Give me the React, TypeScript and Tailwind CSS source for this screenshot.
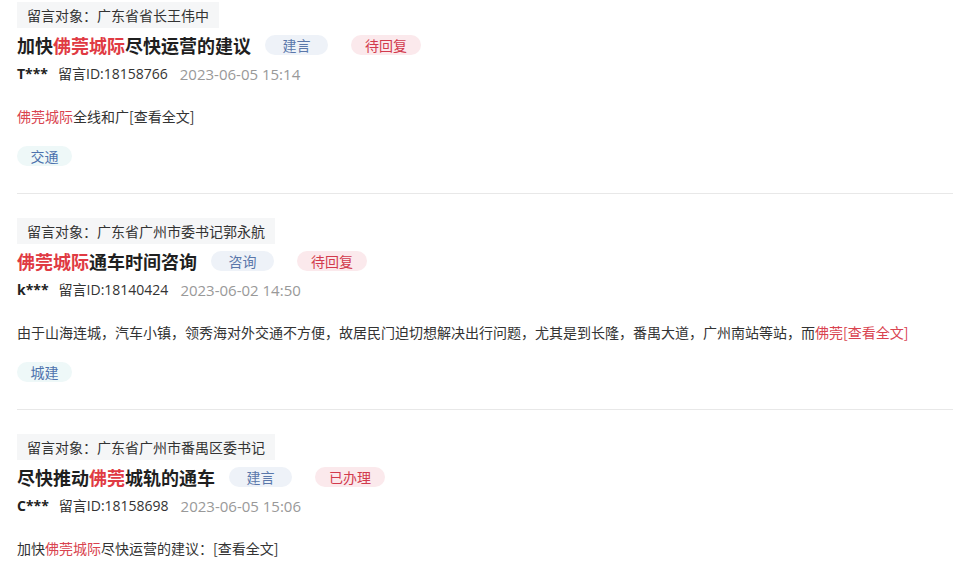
import React from 'react';

type Part = { text: string; hot?: boolean };

interface Message {
  target: string;
  title: Part[];
  kind: string;
  status: string;
  user: string;
  id: string;
  time: string;
  body: Part[];
  tag: string;
}

const messages: Message[] = [
  {
    target: '留言对象：广东省省长王伟中',
    title: [{ text: '加快' }, { text: '佛莞城际', hot: true }, { text: '尽快运营的建议' }],
    kind: '建言',
    status: '待回复',
    user: 'T***',
    id: '18158766',
    time: '2023-06-05 15:14',
    body: [{ text: '佛莞城际', hot: true }, { text: '全线和广[查看全文]' }],
    tag: '交通',
  },
  {
    target: '留言对象：广东省广州市委书记郭永航',
    title: [{ text: '佛莞城际', hot: true }, { text: '通车时间咨询' }],
    kind: '咨询',
    status: '待回复',
    user: 'k***',
    id: '18140424',
    time: '2023-06-02 14:50',
    body: [
      {
        text: '由于山海连城，汽车小镇，领秀海对外交通不方便，故居民门迫切想解决出行问题，尤其是到长隆，番禺大道，广州南站等站，而',
      },
      { text: '佛莞[查看全文]', hot: true },
    ],
    tag: '城建',
  },
  {
    target: '留言对象：广东省广州市番禺区委书记',
    title: [{ text: '尽快推动' }, { text: '佛莞', hot: true }, { text: '城轨的通车' }],
    kind: '建言',
    status: '已办理',
    user: 'C***',
    id: '18158698',
    time: '2023-06-05 15:06',
    body: [{ text: '加快' }, { text: '佛莞城际', hot: true }, { text: '尽快运营的建议：[查看全文]' }],
    tag: '',
  },
];

const MessageItem = ({ msg, first }: { msg: Message; first: boolean }) => (
  <div className={`border-b border-[#e8e8e8] pb-[27px] ${first ? 'pt-[2px]' : 'pt-[24px]'}`}>
    <div className="inline-block h-[26px] bg-[#f5f6f7] px-[10px] text-[14px] leading-[26px] text-[#333]">
      {msg.target}
    </div>

    <div className="mt-[2px] flex h-[30px] items-center">
      <h3 className="text-[18px] font-bold leading-[30px] text-[#1f1f1f]">
        {msg.title.map((p, i) => (
          <span key={i} className={p.hot ? 'text-[#e03a43]' : ''}>
            {p.text}
          </span>
        ))}
      </h3>
      <span className="ml-[14px] flex h-[20px] w-[63px] items-center justify-center rounded-full bg-[#eef2f8] text-[14px] text-[#5a77aa]">
        {msg.kind}
      </span>
      <span className="ml-[23px] flex h-[20px] w-[70px] items-center justify-center rounded-full bg-[#fbe9ec] text-[14px] text-[#d23a4d]">
        {msg.status}
      </span>
    </div>

    <div
      className="mt-[4px] flex h-[20px] items-center text-[14px] leading-[20px]"
      style={{ fontFamily: '"Open Sans", "Noto Sans CJK SC", sans-serif' }}
    >
      <span className="font-bold text-[#222]">{msg.user}</span>
      <span className="ml-[10px] text-[#333]">留言ID:{msg.id}</span>
      <span className="ml-3 text-[15px] text-[#999]">{msg.time}</span>
    </div>

    <p className="mt-[22px] text-[14px] leading-[20px] text-[#333]">
      {msg.body.map((p, i) => (
        <span key={i} className={p.hot ? 'text-[#d9434f]' : ''}>
          {p.text}
        </span>
      ))}
    </p>

    {msg.tag && (
      <div className="mt-[20px] flex">
        <span className="flex h-[20px] w-[55px] items-center justify-center rounded-full bg-[#eef8f8] text-[14px] text-[#4d72ad]">
          {msg.tag}
        </span>
      </div>
    )}
  </div>
);

export default function App() {
  return (
    <div
      className="h-[567px] overflow-hidden bg-white pl-[17px]"
      style={{ fontFamily: '"Noto Sans CJK SC", "Microsoft YaHei", sans-serif' }}
    >
      {messages.map((m, i) => (
        <MessageItem key={i} msg={m} first={i === 0} />
      ))}
    </div>
  );
}
